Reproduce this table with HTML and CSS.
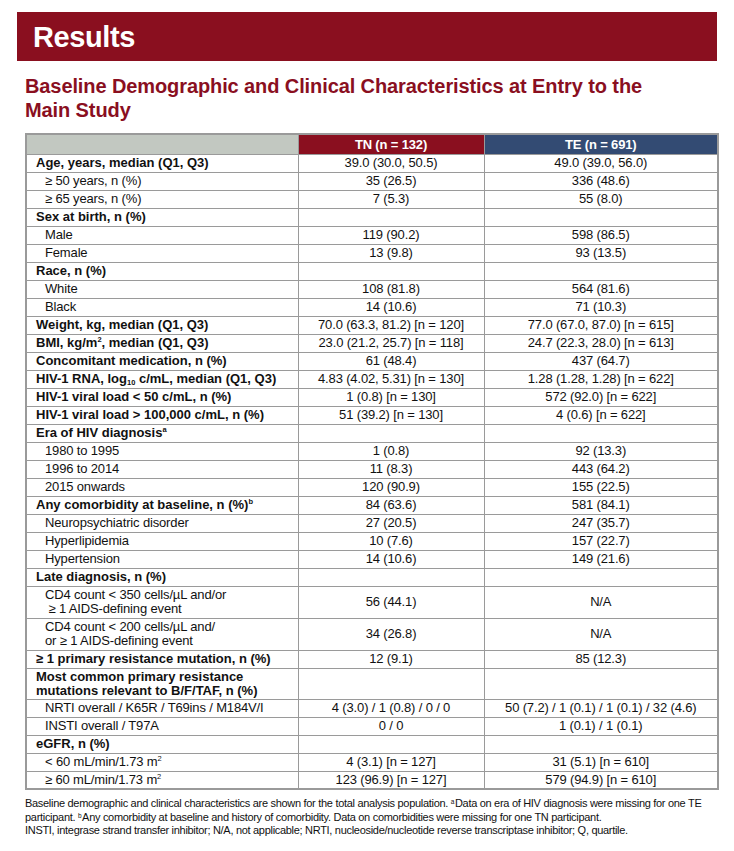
FILE: index.html
```html
<!DOCTYPE html>
<html lang="en">
<head>
  <meta charset="UTF-8" />
  <title>Results</title>
  <link rel="stylesheet" href="styles.css">
</head>
<body>
  <div class="banner">Results</div>

  <h2 class="title">Baseline Demographic and Clinical Characteristics at Entry to the Main Study</h2>

  <table class="results">
    <colgroup>
      <col class="col-label">
      <col class="col-tn">
      <col class="col-te">
    </colgroup>
    <thead>
      <tr>
        <th class="blank"></th>
        <th class="tn">TN (n = 132)</th>
        <th class="te">TE (n = 691)</th>
      </tr>
    </thead>
    <tbody>
      <tr class="main"><td>Age, years, median (Q1, Q3)</td><td>39.0 (30.0, 50.5)</td><td>49.0 (39.0, 56.0)</td></tr>
      <tr><td>≥ 50 years, n (%)</td><td>35 (26.5)</td><td>336 (48.6)</td></tr>
      <tr><td>≥ 65 years, n (%)</td><td>7 (5.3)</td><td>55 (8.0)</td></tr>
      <tr class="main"><td>Sex at birth, n (%)</td><td></td><td></td></tr>
      <tr><td>Male</td><td>119 (90.2)</td><td>598 (86.5)</td></tr>
      <tr><td>Female</td><td>13 (9.8)</td><td>93 (13.5)</td></tr>
      <tr class="main"><td>Race, n (%)</td><td></td><td></td></tr>
      <tr><td>White</td><td>108 (81.8)</td><td>564 (81.6)</td></tr>
      <tr><td>Black</td><td>14 (10.6)</td><td>71 (10.3)</td></tr>
      <tr class="main"><td>Weight, kg, median (Q1, Q3)</td><td>70.0 (63.3, 81.2) [n = 120]</td><td>77.0 (67.0, 87.0) [n = 615]</td></tr>
      <tr class="main"><td>BMI, kg/m<sup>2</sup>, median (Q1, Q3)</td><td>23.0 (21.2, 25.7) [n = 118]</td><td>24.7 (22.3, 28.0) [n = 613]</td></tr>
      <tr class="main"><td>Concomitant medication, n (%)</td><td>61 (48.4)</td><td>437 (64.7)</td></tr>
      <tr class="main"><td>HIV-1 RNA, log<sub>10</sub> c/mL, median (Q1, Q3)</td><td>4.83 (4.02, 5.31) [n = 130]</td><td>1.28 (1.28, 1.28) [n = 622]</td></tr>
      <tr class="main"><td>HIV-1 viral load &lt; 50 c/mL, n (%)</td><td>1 (0.8) [n = 130]</td><td>572 (92.0) [n = 622]</td></tr>
      <tr class="main"><td>HIV-1 viral load &gt; 100,000 c/mL, n (%)</td><td>51 (39.2) [n = 130]</td><td>4 (0.6) [n = 622]</td></tr>
      <tr class="main"><td>Era of HIV diagnosis<sup>a</sup></td><td></td><td></td></tr>
      <tr><td>1980 to 1995</td><td>1 (0.8)</td><td>92 (13.3)</td></tr>
      <tr><td>1996 to 2014</td><td>11 (8.3)</td><td>443 (64.2)</td></tr>
      <tr><td>2015 onwards</td><td>120 (90.9)</td><td>155 (22.5)</td></tr>
      <tr class="main"><td>Any comorbidity at baseline, n (%)<sup>b</sup></td><td>84 (63.6)</td><td>581 (84.1)</td></tr>
      <tr><td>Neuropsychiatric disorder</td><td>27 (20.5)</td><td>247 (35.7)</td></tr>
      <tr><td>Hyperlipidemia</td><td>10 (7.6)</td><td>157 (22.7)</td></tr>
      <tr><td>Hypertension</td><td>14 (10.6)</td><td>149 (21.6)</td></tr>
      <tr class="main"><td>Late diagnosis, n (%)</td><td></td><td></td></tr>
      <tr class="tall"><td>CD4 count &lt; 350 cells/µL and/or<br>&nbsp;≥ 1 AIDS-defining event</td><td>56 (44.1)</td><td>N/A</td></tr>
      <tr class="tall"><td>CD4 count &lt; 200 cells/µL and/<br>or ≥ 1 AIDS-defining event</td><td>34 (26.8)</td><td>N/A</td></tr>
      <tr class="main"><td>≥ 1 primary resistance mutation, n (%)</td><td>12 (9.1)</td><td>85 (12.3)</td></tr>
      <tr class="main tall short"><td>Most common primary resistance<br>mutations relevant to B/F/TAF, n (%)</td><td></td><td></td></tr>
      <tr><td>NRTI overall / K65R / T69ins / M184V/I</td><td>4 (3.0) / 1 (0.8) / 0 / 0</td><td>50 (7.2) / 1 (0.1) / 1 (0.1) / 32 (4.6)</td></tr>
      <tr><td>INSTI overall / T97A</td><td>0 / 0</td><td>1 (0.1) / 1 (0.1)</td></tr>
      <tr class="main"><td>eGFR, n (%)</td><td></td><td></td></tr>
      <tr><td>&lt; 60 mL/min/1.73 m<sup>2</sup></td><td>4 (3.1) [n = 127]</td><td>31 (5.1) [n = 610]</td></tr>
      <tr><td>≥ 60 mL/min/1.73 m<sup>2</sup></td><td>123 (96.9) [n = 127]</td><td>579 (94.9) [n = 610]</td></tr>
    </tbody>
  </table>

  <p class="notes">
    Baseline demographic and clinical characteristics are shown for the total analysis population. <sup>a</sup>Data on era of HIV diagnosis were missing for one TE<br>
    participant. <sup>b</sup>Any comorbidity at baseline and history of comorbidity. Data on comorbidities were missing for one TN participant.<br>
    INSTI, integrase strand transfer inhibitor; N/A, not applicable; NRTI, nucleoside/nucleotide reverse transcriptase inhibitor; Q, quartile.
  </p>
</body>
</html>
```

FILE: styles.css
```css
* { box-sizing: border-box; }

body {
  font-family: "Liberation Sans", Arial, sans-serif;
  margin: 0;
  padding: 12px 17px 0 17px;
  background-color: #fff;
  color: #111;
}

.banner {
  background-color: #8a0f1f;
  color: #fff;
  font-size: 29px;
  font-weight: bold;
  height: 49px;
  line-height: 50px;
  padding-left: 16px;
  letter-spacing: -0.4px;
}

.title {
  margin: 13px 0 0 8px;
  color: #8a0f1f;
  font-size: 20px;
  line-height: 24px;
  font-weight: bold;
  letter-spacing: -0.1px;
  width: 655px;
}

.results {
  margin: 11px 0 0 8px;
  width: 692px;
  border-collapse: collapse;
  border: 2px solid #9a9a9a;
  font-size: 13px;
  letter-spacing: -0.15px;
  table-layout: fixed;
}

.col-label { width: 272px; }
.col-tn { width: 186px; }
.col-te { width: 234px; }

.results th {
  height: 20px;
  padding: 0;
  font-weight: bold;
  color: #fff;
  text-align: center;
  border: 1px solid #9a9a9a;
}

.results th.blank { background-color: #c2c8c1; }
.results th.tn { background-color: #8a0f1f; }
.results th.te { background-color: #334b73; }

.results td {
  height: 18px;
  padding: 0 4px 0 18px;
  line-height: 14px;
  border: 1px solid #9a9a9a;
  text-align: center;
  vertical-align: middle;
  white-space: nowrap;
}

.results td:first-child {
  text-align: left;
}

.results tr.main td:first-child {
  font-weight: bold;
  letter-spacing: 0;
  padding-left: 9px;
}

.results td + td { padding-left: 4px; }

.results tr.tall td { height: 32px; }
.results tr.short td { height: 31px; }

.results sup,
.results sub {
  font-size: 7.5px;
  line-height: 0;
  position: relative;
  vertical-align: baseline;
  letter-spacing: 0;
}

.results sup { top: -5px; }
.results sub { top: 2px; }

.notes {
  margin: 7px 0 0 8px;
  font-size: 11px;
  line-height: 13.5px;
  letter-spacing: -0.3px;
  color: #111;
  white-space: nowrap;
}

.notes sup {
  font-size: 6.5px;
  line-height: 0;
  position: relative;
  top: -3px;
  vertical-align: baseline;
  letter-spacing: 0;
  margin-right: 0.5px;
}
```
